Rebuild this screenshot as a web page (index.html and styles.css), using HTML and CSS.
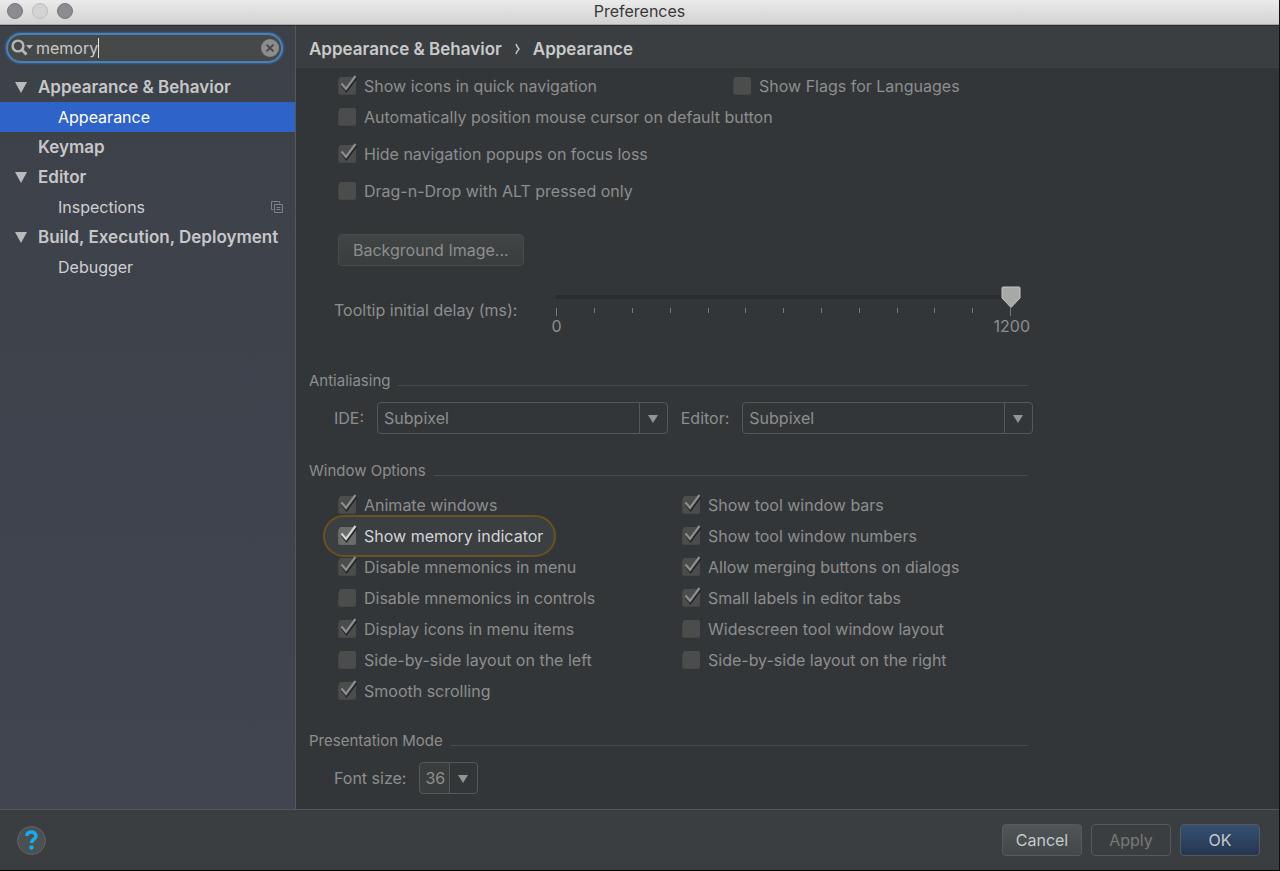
FILE: index.html
```html
<!DOCTYPE html>
<html lang="en">
<head>
<meta charset="utf-8">
<title>Preferences</title>
<link rel="stylesheet" href="styles.css">
</head>
<body>
<div class="window">
  <header class="titlebar">
    <div class="lights"><span class="light"></span><span class="light light-off"></span><span class="light"></span></div>
    <h1 class="window-title">Preferences</h1>
  </header>
  <div class="body">
    <aside class="sidebar">
      <div class="search">
        <svg class="search-icon" width="25" height="18" viewBox="0 0 25 18" aria-hidden="true"><circle cx="7" cy="7" r="5.4" fill="none" stroke="#b6b9bb" stroke-width="2.4"/><path d="M10.800 10.800L15.500 15.500" stroke="#b6b9bb" stroke-width="2.800"/><path d="M15 6h7l-3.500 4z" fill="#b6b9bb"/></svg>
        <input class="search-input" type="text" value="memory" aria-label="Search preferences">
        <span class="caret"></span>
        <button class="clear" type="button" aria-label="Clear search"><svg width="18" height="18" viewBox="0 0 18 18"><circle cx="9" cy="9" r="9" fill="#8b8c8b"/><path d="M5.6 5.6l6.8 6.8M12.4 5.6l-6.8 6.8" stroke="#424545" stroke-width="1.8"/></svg></button>
      </div>
      <nav class="tree">
        <a class="node group" href="#ab"><svg class="arrow" viewBox="0 0 12 11"><path d="M0 0h12L6 11z"/></svg>Appearance &amp; Behavior</a>
        <a class="node leaf selected" href="#appearance">Appearance</a>
        <a class="node group plain" href="#keymap">Keymap</a>
        <a class="node group" href="#editor"><svg class="arrow" viewBox="0 0 12 11"><path d="M0 0h12L6 11z"/></svg>Editor</a>
        <a class="node leaf" href="#inspections">Inspections<svg class="copy" width="12" height="12" viewBox="0 0 12 12" fill="none" stroke="#7c828a"><path d="M2.5 8.5h-2v-8h8v2"/><path d="M3.5 3.5h8v8h-8zM5.5 6.5h4M5.5 8.5h4"/></svg></a>
        <a class="node group" href="#build"><svg class="arrow" viewBox="0 0 12 11"><path d="M0 0h12L6 11z"/></svg>Build, Execution, Deployment</a>
        <a class="node leaf" href="#debugger">Debugger</a>
      </nav>
    </aside>
    <main class="main">
      <div class="crumbs"><span>Appearance &amp; Behavior</span><svg width="5" height="12" viewBox="0 0 5 12" fill="none" stroke="#c4c6c7" stroke-width="1.5"><path d="M1 1q1 3 3 5q-2 2-3 5"/></svg><span>Appearance</span></div>
      <div class="content">
        <div class="options top-options">
          <div class="column">
            <label class="check"><input type="checkbox" checked>Show icons in quick navigation</label>
            <label class="check"><input type="checkbox">Automatically position mouse cursor on default button</label>
            <label class="check spaced"><input type="checkbox" checked>Hide navigation popups on focus loss</label>
            <label class="check spaced"><input type="checkbox">Drag-n-Drop with ALT pressed only</label>
          </div>
          <div class="column">
            <label class="check"><input type="checkbox">Show Flags for Languages</label>
          </div>
        </div>
        <button class="button dim" type="button">Background Image...</button>
        <div class="delay">
          <label for="delay">Tooltip initial delay (ms):</label>
          <div class="slider">
            <input id="delay" type="range" min="0" max="1200" value="1200">
            <div class="ticks"><i></i><i></i><i></i><i></i><i></i><i></i><i></i><i></i><i></i><i></i><i></i><i></i><i></i></div>
            <div class="scale"><span>0</span><span>1200</span></div>
          </div>
        </div>
        <h2 class="section">Antialiasing</h2>
        <div class="fields">
          <label for="ide">IDE:</label>
          <select id="ide" class="combo"><option>Subpixel</option></select>
          <label for="ed">Editor:</label>
          <select id="ed" class="combo"><option>Subpixel</option></select>
        </div>
        <h2 class="section">Window Options</h2>
        <div class="options window-options">
          <div class="column">
            <label class="check"><input type="checkbox" checked>Animate windows</label>
            <label class="check found"><input type="checkbox" checked>Show memory indicator</label>
            <label class="check"><input type="checkbox" checked>Disable mnemonics in menu</label>
            <label class="check"><input type="checkbox">Disable mnemonics in controls</label>
            <label class="check"><input type="checkbox" checked>Display icons in menu items</label>
            <label class="check"><input type="checkbox">Side-by-side layout on the left</label>
            <label class="check"><input type="checkbox" checked>Smooth scrolling</label>
          </div>
          <div class="column">
            <label class="check"><input type="checkbox" checked>Show tool window bars</label>
            <label class="check"><input type="checkbox" checked>Show tool window numbers</label>
            <label class="check"><input type="checkbox" checked>Allow merging buttons on dialogs</label>
            <label class="check"><input type="checkbox" checked>Small labels in editor tabs</label>
            <label class="check"><input type="checkbox">Widescreen tool window layout</label>
            <label class="check"><input type="checkbox">Side-by-side layout on the right</label>
          </div>
        </div>
        <h2 class="section">Presentation Mode</h2>
        <div class="fields">
          <label for="size">Font size:</label>
          <select id="size" class="combo small"><option>36</option></select>
        </div>
      </div>
    </main>
  </div>
  <footer class="footer">
    <button class="help" type="button" aria-label="Help"><svg width="13" height="20" viewBox="0 0 13 20"><path d="M2 6V4.5Q3 2 6.5 2T11 5.5Q11 8 8.5 9.5Q6.5 10.8 6.5 13" fill="none" stroke="#12aef0" stroke-width="3.4"/><circle cx="6.5" cy="17.5" r="2.2" fill="#12aef0"/></svg></button>
    <button class="button action" type="button">Cancel</button>
    <button class="button action apply" type="button">Apply</button>
    <button class="button action ok" type="button">OK</button>
  </footer>
</div>
</body>
</html>
```
FILE: styles.css
```css
* { box-sizing: border-box; }

body {
  margin: 0;
  background: #0a0506;
  font: 16px/20px Inter, "Liberation Sans", sans-serif;
  color: #8c8e8f;
}

input, select, button { font: inherit; color: inherit; margin: 0; }

.window {
  display: flex;
  flex-direction: column;
  min-height: 100vh;
  border-right: 1px solid #111;
  border-bottom: 1px solid #0a0506;
}

.titlebar {
  display: grid;
  grid-template-columns: 1fr auto 1fr;
  align-items: center;
  height: 25px;
  padding: 0 7px 2px;
  background: linear-gradient(#ebebeb, #d2d2d2);
  border-bottom: 1px solid #a5aaa8;
}
.window-title { margin: 0; font-size: 16px; font-weight: 400; color: #383838; }
.lights { display: flex; gap: 9px; }
.light { width: 16px; height: 16px; border-radius: 50%; background: #8c8b90; border: 1px solid #77767a; }
.light-off { background: #d3d3d3; border-color: #bdbdbd; }

.body { flex: 1; display: flex; background: #333638; }

.sidebar {
  flex: none;
  width: 296px;
  background: linear-gradient(#3d4147, #3e424b 30%, #41454f);
  border-top: 1px solid #2a2d30;
  border-right: 1px solid #55575a;
}
.search {
  display: flex;
  align-items: center;
  height: 30px;
  margin: 7px 12px 8px 6px;
  padding: 0 2px 0 3px;
  background: #454948;
  border: 2px solid #4a80bb;
  border-radius: 15px;
  box-shadow: 0 0 2px 1px #3b618c;
}
.search-icon { flex: none; }
.search-input {
  field-sizing: content;
  padding: 0;
  border: 0;
  outline: 0;
  background: none;
  color: #c8cacb;
}
.caret { width: 1px; height: 20px; background: #e2e2e2; }
.clear { display: flex; margin-left: auto; padding: 0; border: 0; background: none; }

.node {
  display: flex;
  align-items: center;
  height: 30px;
  padding-right: 12px;
  color: #cfd0d2;
  text-decoration: none;
  white-space: nowrap;
}
.tree { padding-top: 1px; }
.group { padding-left: 15px; font-size: 17px; font-weight: 600; color: #c6c7c8; }
.plain { padding-left: 38px; }
.leaf { padding-left: 58px; }
.selected { background: #2e63ca; color: #fff; }
.arrow { width: 12px; height: 11px; margin-right: 11px; fill: #b8babb; }
.copy { margin-left: auto; }

.main { flex: 1; min-width: 0; border-top: 1px solid #2a2d30; }
.crumbs {
  display: flex;
  align-items: center;
  gap: 13px;
  height: 42px;
  padding: 4px 13px 0;
  background: #3b3e40;
  border-bottom: 1px solid #3f4244;
  font-size: 17px;
  font-weight: 600;
  color: #c8cacb;
}
.content { max-width: 737px; padding: 2px 0 15px 13px; }

.options { display: grid; padding-left: 29px; }
.top-options { grid-template-columns: 395px 1fr; white-space: nowrap; }
.window-options { grid-template-columns: 344px 1fr; margin-bottom: 25px; }
.column { display: flex; flex-direction: column; align-items: flex-start; }
.check {
  position: relative;
  z-index: 1;
  display: flex;
  align-items: center;
  gap: 6px;
  height: 31px;
}
.spaced { margin-top: 6px; }
.check input {
  appearance: none;
  width: 20px;
  height: 22px;
  background: url("data:image/svg+xml,%3Csvg xmlns='http://www.w3.org/2000/svg' width='20' height='22'%3E%3Crect x='0' y='3' width='18' height='17' rx='2' fill='%232b2d2e'/%3E%3Crect x='0' y='4' width='18' height='16' rx='2' fill='%23454647'/%3E%3Crect x='1' y='2' width='17' height='17' rx='2' fill='%234b4d4d'/%3E%3C/svg%3E") no-repeat;
}
.check input:checked {
  background-image: url("data:image/svg+xml,%3Csvg xmlns='http://www.w3.org/2000/svg' width='20' height='22'%3E%3Crect x='0' y='4' width='18' height='16' rx='2' fill='%23454647'/%3E%3Crect x='1' y='2' width='17' height='17' rx='2' fill='%234b4d4d'/%3E%3Cpath d='M4 10l4.500 6L18.500 2.500' fill='none' stroke='%23232526' stroke-width='2.500'/%3E%3Cpath d='M3.500 8.500l4.500 5.500L17.500 1' fill='none' stroke='%238d8f8f' stroke-width='2.200'/%3E%3C/svg%3E");
}
.found { color: #d3d4d5; }
.found::before {
  content: "";
  position: absolute;
  z-index: -1;
  inset: -5px -13px -6px -15px;
  background: #3c3f41;
  border: 2px solid #6b5121;
  border-radius: 21px;
}
.found input:checked {
  background-image: url("data:image/svg+xml,%3Csvg xmlns='http://www.w3.org/2000/svg' width='20' height='22'%3E%3Crect x='0' y='4' width='18' height='16' rx='2' fill='%23656768'/%3E%3Crect x='1' y='2' width='17' height='17' rx='2' fill='%236a6c6c'/%3E%3Cpath d='M4 10l4.500 6L18.500 2.500' fill='none' stroke='%23232526' stroke-width='2.500'/%3E%3Cpath d='M3.500 8.500l4.500 5.500L17.500 1' fill='none' stroke='%23d2d4d4' stroke-width='2.200'/%3E%3C/svg%3E");
}

.button {
  height: 32px;
  padding: 0 14px;
  border: 1px solid #565a5a;
  border-radius: 4px;
  background: linear-gradient(#505658, #424849);
}
.dim { margin: 28px 0 0 29px; background: linear-gradient(#414546, #3a3d3e); border-color: #484b4c; }

.delay { display: flex; gap: 29px; height: 50px; margin: 20px 12px 35px 25px; }
.delay > label { padding-top: 14px; white-space: nowrap; }
.slider { flex: 1; }
.slider input {
  appearance: none;
  display: block;
  width: 100%;
  height: 22px;
  background: linear-gradient(#2a2c2d, #2a2c2d) center 9px / calc(100% - 20px) 4px no-repeat;
}
.slider input::-webkit-slider-thumb {
  appearance: none;
  width: 20px;
  height: 22px;
  background: url("data:image/svg+xml,%3Csvg xmlns='http://www.w3.org/2000/svg' width='20' height='22'%3E%3Cpath d='M1 2Q1 1 2 1H18Q19 1 19 2V12L10 21.500L1 12Z' fill='%23a7a9a8' stroke='%23c4c6c5'/%3E%3C/svg%3E") no-repeat;
}
.ticks { display: flex; justify-content: space-between; align-items: flex-start; height: 8px; padding: 0 10px; }
.ticks i { width: 1px; height: 5px; background: #77797a; }
.ticks i:first-child, .ticks i:last-child { height: 8px; }
.scale { display: flex; justify-content: space-between; margin: 0 -9px 0 5px; }

.section {
  display: flex;
  align-items: center;
  gap: 8px;
  height: 20px;
  margin: 0 5px 8px 0;
  font-size: 15px;
  font-weight: 400;
  white-space: nowrap;
}
.section::after { content: ""; flex: 1; height: 1px; margin-top: 8px; background: #494a49; }

.fields { display: flex; align-items: center; gap: 13px; padding: 3px 0 0 25px; margin-bottom: 27px; }
.combo {
  appearance: none;
  flex: 1;
  min-width: 0;
  height: 32px;
  padding: 0 34px 0 6px;
  border: 1px solid #565757;
  border-radius: 4px;
  background:
    url("data:image/svg+xml,%3Csvg xmlns='http://www.w3.org/2000/svg' width='28' height='30'%3E%3Cpath d='M.5 0V30' stroke='%23565757'/%3E%3Cpath d='M9 12H19L14 20Z' fill='%23939595'/%3E%3C/svg%3E") right / 28px 30px no-repeat,
    #333638;
}
.small {
  flex: none;
  width: 59px;
  padding: 0 28px 0 5px;
  background-image:
    url("data:image/svg+xml,%3Csvg xmlns='http://www.w3.org/2000/svg' width='28' height='30'%3E%3Crect width='28' height='30' fill='%23333638'/%3E%3Cpath d='M.5 0V30' stroke='%23565757'/%3E%3Cpath d='M9 12H19L14 20Z' fill='%23939595'/%3E%3C/svg%3E");
  background-color: #3a3d3e;
}
.fields:last-child { margin-bottom: 0; }

.footer {
  display: flex;
  align-items: center;
  gap: 9px;
  height: 61px;
  padding: 0 19px 0 17px;
  background: #3b3e40;
  border-top: 1px solid #555758;
}
.help {
  display: flex;
  align-items: center;
  justify-content: center;
  width: 29px;
  height: 29px;
  margin-right: auto;
  padding: 0;
  border: 1px solid #626566;
  border-radius: 50%;
  background: #4b5052;
}
.action { width: 80px; padding: 0; color: #c6c8c9; }
.apply { background: none; color: #777979; }
.ok { background: linear-gradient(#365072, #253650); }
```
